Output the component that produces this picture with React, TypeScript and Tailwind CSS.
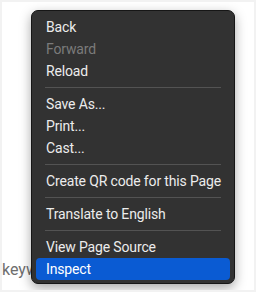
import React from "react";

type Item = { label: string; disabled?: boolean; active?: boolean } | "sep";

const items: Item[] = [
  { label: "Back" },
  { label: "Forward", disabled: true },
  { label: "Reload" },
  "sep",
  { label: "Save As..." },
  { label: "Print..." },
  { label: "Cast..." },
  "sep",
  { label: "Create QR code for this Page" },
  "sep",
  { label: "Translate to English" },
  "sep",
  { label: "View Page Source" },
  { label: "Inspect", active: true },
];

export default function App() {
  return (
    <div className="w-[256px] h-[292px] bg-[#f2f2f2] p-[2px] font-['Roboto','Liberation_Sans',sans-serif]">
      <div className="relative w-full h-full bg-white overflow-hidden">
        <span className="absolute left-0 top-[256px] text-[16px] text-[#6e6e6e]">keyw</span>
        <div className="absolute left-[29px] top-[8px] w-[204px] rounded-[7px] bg-[#323232] border border-[#161616] shadow-[0_4px_12px_rgba(0,0,0,0.35)] px-[4px] pt-[5px] pb-[3px]">
          {items.map((it, i) =>
            it === "sep" ? (
              <div key={i} className="h-[11px] flex items-center px-[9px]">
                <div className="h-px w-full bg-[#535353]" />
              </div>
            ) : (
              <div
                key={i}
                className={`h-[22px] flex items-center px-[10px] rounded-[4px] text-[14px] leading-none tracking-[-0.15px] whitespace-nowrap ${
                  it.active ? "bg-[#0a5bd3] text-white" : it.disabled ? "text-[#7b7b7b]" : "text-[#ececec]"
                }`}
              >
                {it.label}
              </div>
            )
          )}
        </div>
      </div>
    </div>
  );
}
